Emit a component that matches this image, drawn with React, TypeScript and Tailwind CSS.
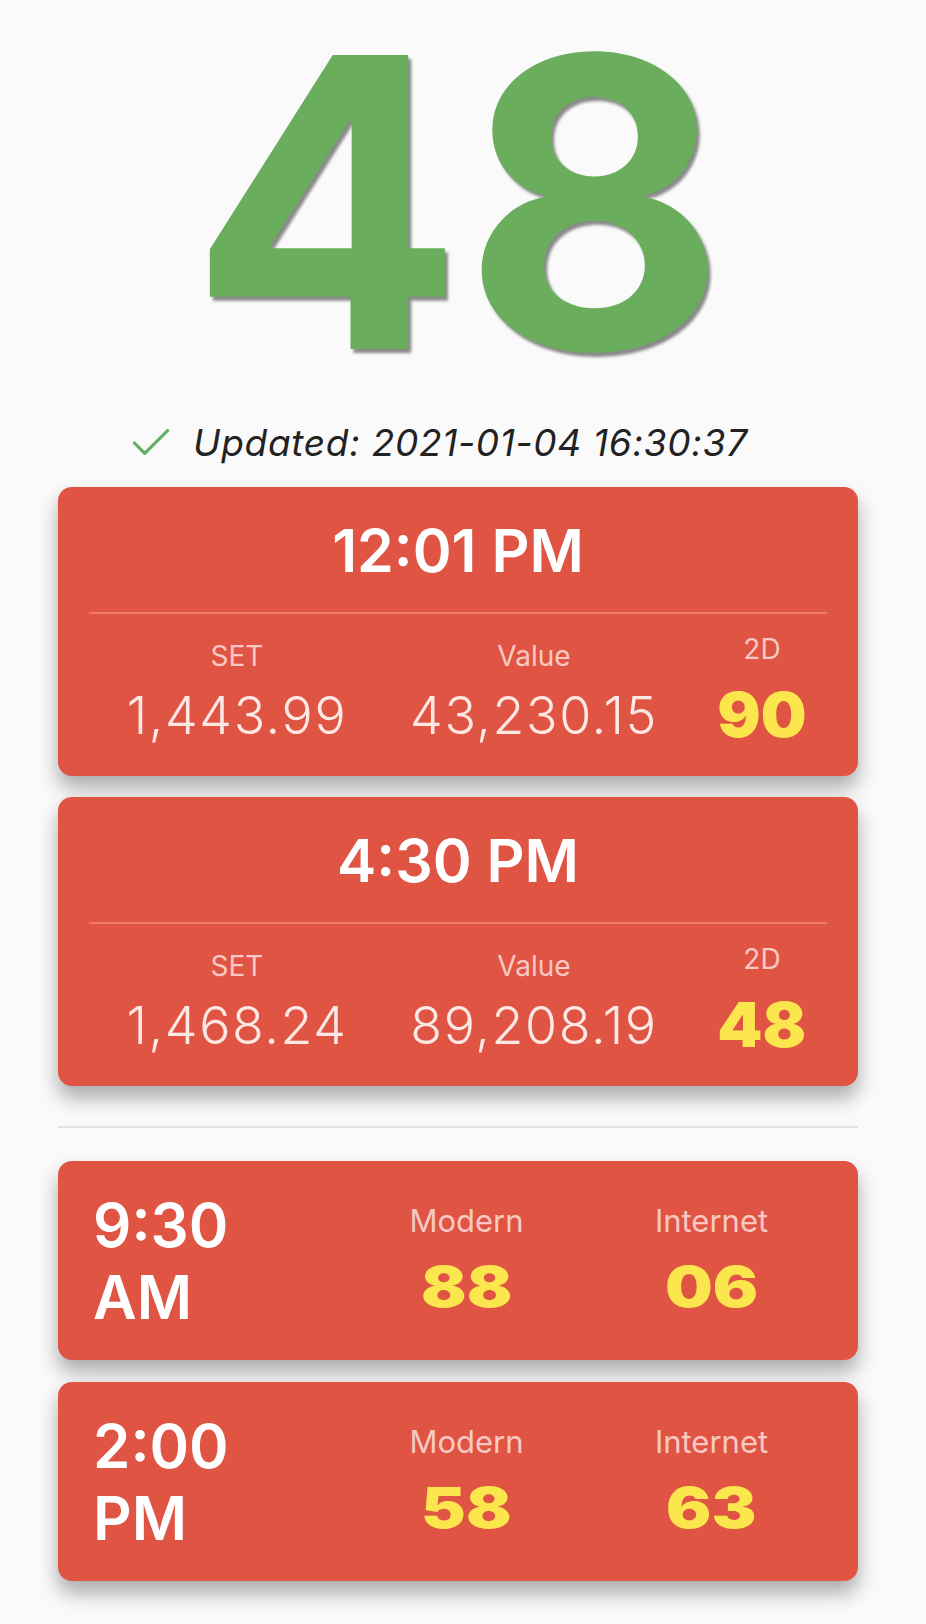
import React from 'react';
import { Check } from 'lucide-react';

const font = "font-['Inter','Noto_Sans',sans-serif]";

const Stat: React.FC<{ label: string; value: string; big?: boolean }> = ({ label, value, big }) => (
  <div className="flex flex-col items-center">
    <span className="text-[28px] leading-[34px] text-[#f8c9c2]">{label}</span>
    {big ? (
      <span className="mt-[11px] inline-block scale-x-[1.04] text-[62px] leading-[76px] font-black text-[#fbe64e]">{value}</span>
    ) : (
      <span className="mt-[12px] text-[52px] leading-[61px] font-light tracking-[1.6px] text-[#fde8e4]">{value}</span>
    )}
  </div>
);

const SetCard: React.FC<{ time: string; set: string; value: string; twoD: string }> = ({ time, set, value, twoD }) => (
  <div className="rounded-[14px] bg-[#e05444] pt-[28px] pb-[23px] shadow-[0_12px_20px_rgba(0,0,0,0.32)]">
    <h2 className="text-center text-[59px] leading-[71px] font-semibold text-white">{time}</h2>
    <div className="mx-[31px] mt-[26px] h-[2px] bg-[#ee7d70]" />
    <div className="mt-[18px] grid grid-cols-[300px_294px_162px] items-center pl-[29px]">
      <Stat label="SET" value={set} />
      <Stat label="Value" value={value} />
      <Stat label="2D" value={twoD} big />
    </div>
  </div>
);

const DrawCard: React.FC<{ time: string; modern: string; internet: string }> = ({ time, modern, internet }) => (
  <div className="grid grid-cols-[1fr_245px_245px] items-center rounded-[14px] bg-[#e05444] pl-[35px] pr-[24px] pt-[28px] pb-[27px] shadow-[0_12px_20px_rgba(0,0,0,0.32)]">
    <div className="max-w-[150px] text-[60px] leading-[72px] font-semibold text-white">{time}</div>
    {[['Modern', modern], ['Internet', internet]].map(([label, num]) => (
      <div key={label} className="flex flex-col items-center">
        <span className="text-[31px] leading-[37px] text-[#f8c9c2]">{label}</span>
        <span className="mt-[14px] inline-block scale-x-[1.18] text-[57px] leading-[67px] font-black text-[#fbe64e]">{num}</span>
      </div>
    ))}
  </div>
);

export default function App() {
  return (
    <div className={`min-h-[1624px] bg-[#fafafa] ${font}`}>
      <div className="ml-[58px] w-[800px]">
        <div className="text-center text-[404px] leading-none font-bold text-[#69ad5d] [text-shadow:3px_4px_3px_rgba(0,0,0,0.45)]">
          48
        </div>

        <div className="mt-[14px] flex h-[50px] items-center pl-[68px]">
          <Check size={50} strokeWidth={1.5} className="text-[#5fae5f]" />
          <span className="ml-[17px] text-[37px] leading-[44px] italic tracking-[0.7px] text-[#222]">
            Updated: 2021-01-04 16:30:37
          </span>
        </div>

        <div className="mt-[19px]">
          <SetCard time="12:01 PM" set="1,443.99" value="43,230.15" twoD="90" />
        </div>
        <div className="mt-[21px]">
          <SetCard time="4:30 PM" set="1,468.24" value="89,208.19" twoD="48" />
        </div>

        <div className="mt-[40px] h-[2px] bg-[#e2e2e2]" />

        <div className="mt-[33px]">
          <DrawCard time="9:30 AM" modern="88" internet="06" />
        </div>
        <div className="mt-[22px]">
          <DrawCard time="2:00 PM" modern="58" internet="63" />
        </div>
      </div>
    </div>
  );
}
